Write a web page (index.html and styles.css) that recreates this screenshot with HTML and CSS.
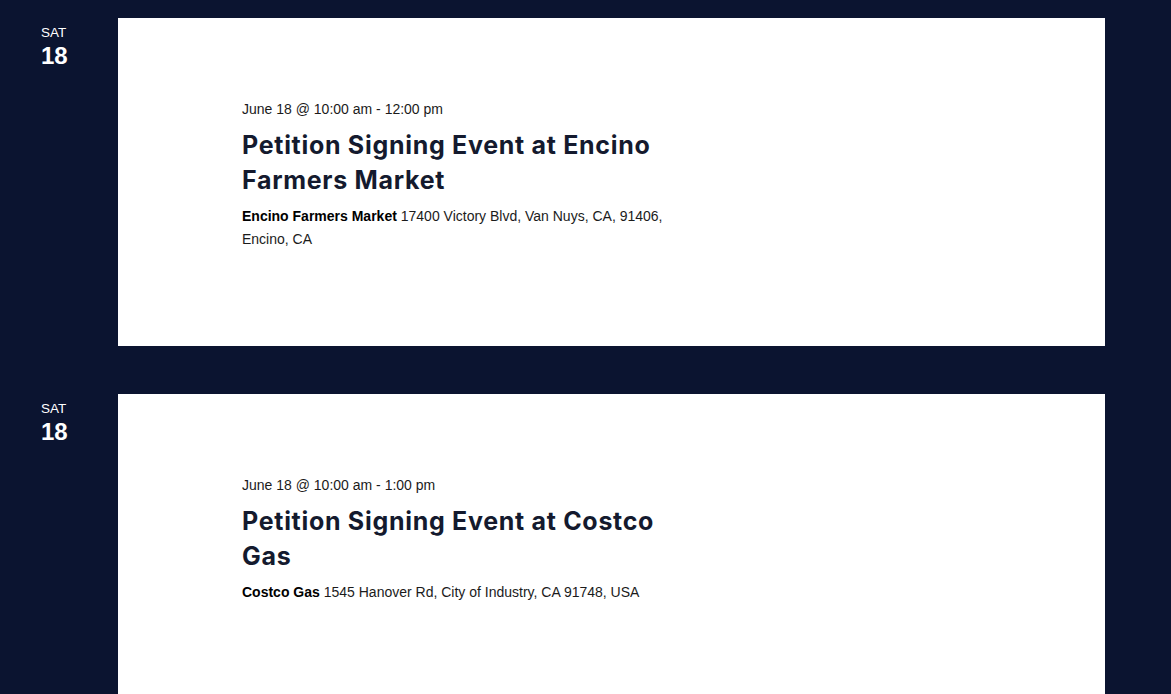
FILE: index.html
```html
<!DOCTYPE html>
<html lang="en">
<head>
  <meta charset="UTF-8" />
  <meta name="viewport" content="width=device-width, initial-scale=1.0"/>
  <title>Events</title>
  <link rel="stylesheet" href="styles.css">
</head>
<body>

  <div class="events">

    <div class="event-row">
      <div class="date-tag">
        <span class="weekday">SAT</span>
        <span class="day">18</span>
      </div>
      <div class="event-card">
        <div class="event-info">
          <p class="event-time">June 18 @ 10:00 am - 12:00 pm</p>
          <h2 class="event-title">Petition Signing Event at Encino Farmers Market</h2>
          <p class="event-venue"><strong>Encino Farmers Market</strong> 17400 Victory Blvd, Van Nuys, CA, 91406, Encino, CA</p>
        </div>
      </div>
    </div>

    <div class="event-row">
      <div class="date-tag">
        <span class="weekday">SAT</span>
        <span class="day">18</span>
      </div>
      <div class="event-card">
        <div class="event-info">
          <p class="event-time">June 18 @ 10:00 am - 1:00 pm</p>
          <h2 class="event-title">Petition Signing Event at Costco Gas</h2>
          <p class="event-venue"><strong>Costco Gas</strong> 1545 Hanover Rd, City of Industry, CA 91748, USA</p>
        </div>
      </div>
    </div>

  </div>

</body>
</html>
```

FILE: styles.css
```css
body {
  font-family: 'Liberation Sans', Arial, Helvetica, sans-serif;
  background: #0b1430;
  margin: 0;
  padding: 0;
}

.events {
  padding-top: 18px;
  width: 1105px;
}

.event-row {
  display: flex;
  margin-bottom: 48px;
}

.date-tag {
  width: 118px;
  padding-left: 41px;
  box-sizing: border-box;
  display: flex;
  flex-direction: column;
  color: white;
}

.weekday {
  font-size: 13.5px;
  line-height: 14px;
  margin-top: 8px;
}

.day {
  font-size: 24px;
  font-weight: bold;
  line-height: 30px;
  margin-top: 1px;
}

.event-card {
  flex: 1;
  background: white;
  height: 328px;
  padding: 81px 0 0 124px;
  box-sizing: border-box;
}

.event-info {
  width: 450px;
}

.event-time {
  margin: 0;
  font-size: 14px;
  line-height: 20px;
  color: #1b1b1b;
}

.event-title {
  margin: 9px 0 7px;
  font-family: 'Inter', 'Open Sans', sans-serif;
  font-weight: 700;
  font-size: 25px;
  letter-spacing: 0.7px;
  line-height: 35px;
  color: #141a2e;
}

.event-venue {
  margin: 0;
  font-size: 14px;
  line-height: 23px;
  color: #1b1b1b;
}

.event-venue strong {
  color: #000;
}
```
